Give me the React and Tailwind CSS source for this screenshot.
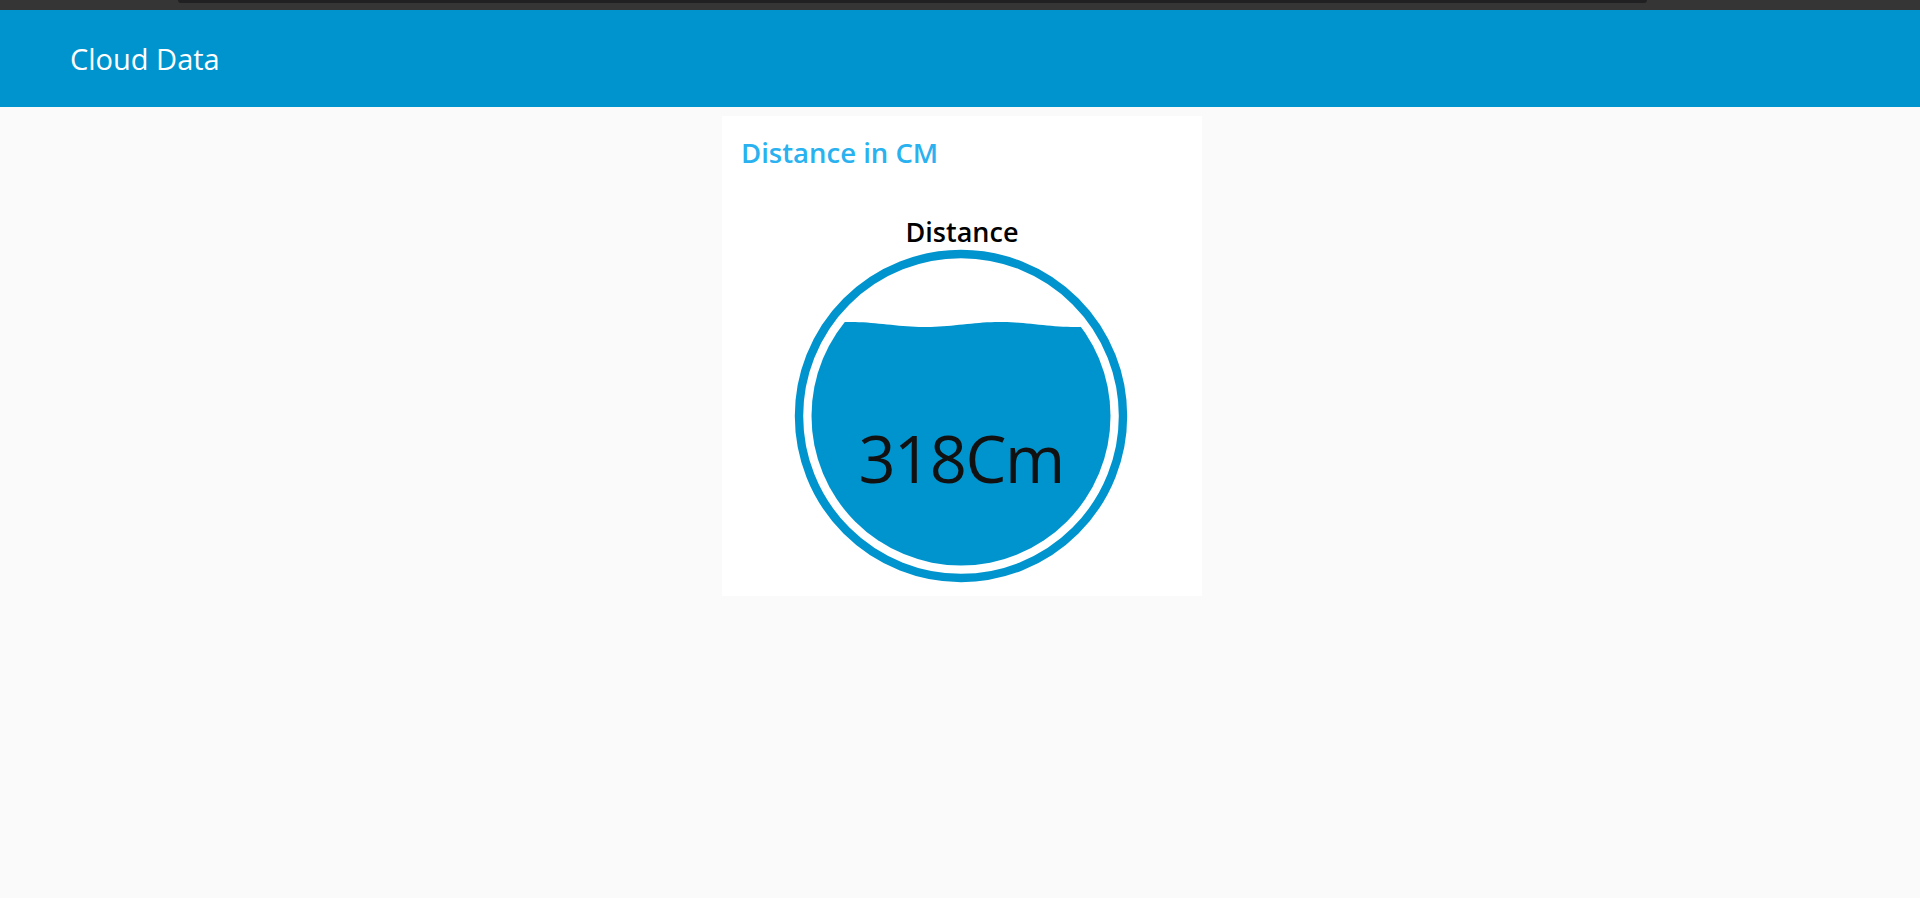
import React from 'react';

const BLUE = '#0094ce';

// liquid fill gauge: ring, gap, clipped wave fill and value text
const LiquidGauge = ({ value, unit }) => {
  const cx = 170;
  const cy = 170;
  const level = 78.5; // wave mean line, in svg coords
  const pts = [];
  for (let x = 0; x <= 340; x += 4) {
    const y = level - 2.5 * Math.cos((2 * Math.PI * (x - 209)) / 150);
    pts.push(`${x},${y.toFixed(2)}`);
  }
  const wave = `M0,340 L${pts.join(' L')} L340,340 Z`;

  return (
    <svg width="340" height="340" viewBox="0 0 340 340" className="block">
      <defs>
        <clipPath id="fillClip">
          <circle cx={cx} cy={cy} r="149.5" />
        </clipPath>
      </defs>
      <circle cx={cx} cy={cy} r="162" fill="none" stroke={BLUE} strokeWidth="8.4" />
      <path d={wave} fill={BLUE} clipPath="url(#fillClip)" />
      <text
        x={cx}
        y="236.5"
        textAnchor="middle"
        fill="#111"
        fontSize="65"
        letterSpacing="-1.5"
        style={{ fontFamily: '"Open Sans", sans-serif' }}
      >
        {value}
        {unit}
      </text>
    </svg>
  );
};

export default function App() {
  return (
    <div className="min-h-[898px] bg-[#fafafa]" style={{ fontFamily: '"Open Sans", sans-serif' }}>
      {/* window chrome strip */}
      <div className="h-[10px] bg-[#353535] pl-[178px] pr-[273px]">
        <div className="h-[3px] bg-[#202022] rounded-b-md" />
      </div>

      <header className="h-[97px] bg-[#0094ce] flex items-center pl-[70px]">
        <span className="text-white text-[29px] leading-none">Cloud Data</span>
      </header>

      <main className="flex justify-center pl-1 pt-[9px]">
        <section className="w-[480px] bg-white pt-[19px] pb-[10px]">
          <h2 className="px-[19px] text-[27.5px] leading-[36px] font-semibold text-[#29b1f0]">
            Distance in CM
          </h2>
          <div className="mt-[47px] text-center text-[27px] leading-[28px] font-semibold text-black">
            Distance
          </div>
          <div className="flex justify-center pr-[2px]">
            <LiquidGauge value={318} unit="Cm" />
          </div>
        </section>
      </main>
    </div>
  );
}
